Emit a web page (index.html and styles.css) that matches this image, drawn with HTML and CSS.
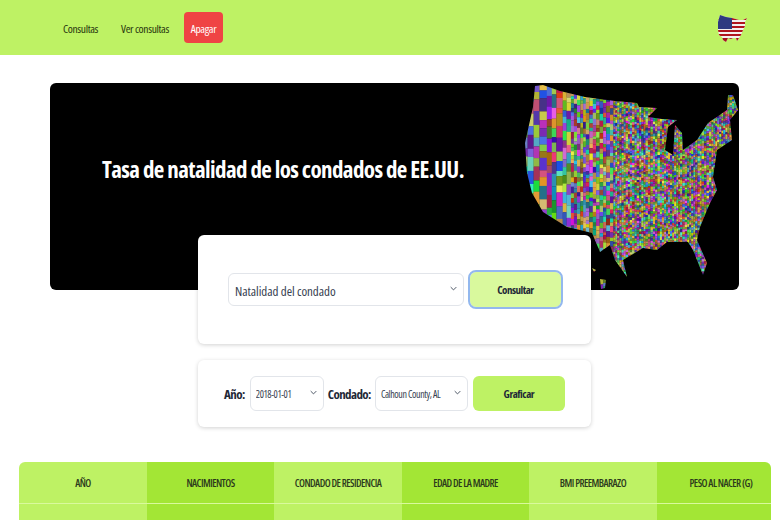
FILE: index.html
```html
<!DOCTYPE html>
<html lang="es">
<head>
<meta charset="utf-8">
<title>Tasa de natalidad</title>
<link rel="stylesheet" href="styles.css">
</head>
<body>
<nav class="nav">
  <a class="nav-link" href="#">Consultas</a>
  <a class="nav-link nav-link-second" href="#">Ver consultas</a>
  <a class="nav-off" href="#">Apagar</a>
  <svg class="flag" viewBox="718 13 30 28" aria-hidden="true">
    <defs>
      <clipPath id="flag-clip">
        <path d="M720 14 L726 16 L732 17 L739 19 L743 19 L747 17 L745 21 L745 25 L743 29 L741 34 L739 37 L737 40 L736 37 L733 37 L731 38 L728 37 L726 41 L723 39 L722 36 L719 34 L718 29 L718 21 Z"/>
      </clipPath>
    </defs>
    <g clip-path="url(#flag-clip)">
      <rect x="718" y="13" width="30" height="28" fill="#f4f0f0"/>
      <rect x="718" y="17" width="30" height="2" fill="#b0141e"/>
      <rect x="718" y="21" width="30" height="2" fill="#b0141e"/>
      <rect x="718" y="25" width="30" height="2" fill="#b0141e"/>
      <rect x="718" y="29" width="30" height="2" fill="#b0141e"/>
      <rect x="718" y="33" width="30" height="2" fill="#b0141e"/>
      <rect x="718" y="37" width="30" height="4" fill="#a5141e"/>
      <rect x="718" y="13" width="14" height="15" fill="#2e3a80"/>
    </g>
  </svg>
</nav>

<main class="main">
  <section class="hero">
    <h1 class="hero-title">Tasa de natalidad de los condados de EE.UU.</h1>
    <svg id="us-map" class="hero-map" viewBox="524 83 215 207" aria-hidden="true"></svg>
  </section>

  <section class="card card-query">
    <div class="select-wrap select-wide">
      <select class="select"><option>Natalidad del condado</option></select>
      <svg class="chev" viewBox="0 0 10 6"><path d="M1 1l4 4 4-4"/></svg>
    </div>
    <button class="btn btn-query" type="button">Consultar</button>
  </section>

  <section class="card card-chart">
    <label class="label" for="anio">Año:</label>
    <div class="select-wrap select-year">
      <select class="select select-small" id="anio"><option>2018-01-01</option></select>
      <svg class="chev" viewBox="0 0 10 6"><path d="M1 1l4 4 4-4"/></svg>
    </div>
    <label class="label" for="condado">Condado:</label>
    <div class="select-wrap select-county">
      <select class="select select-small" id="condado"><option>Calhoun County, AL</option></select>
      <svg class="chev" viewBox="0 0 10 6"><path d="M1 1l4 4 4-4"/></svg>
    </div>
    <button class="btn btn-chart" type="button">Graficar</button>
  </section>
</main>

<div class="table">
  <div class="cell head">AÑO</div>
  <div class="cell head alt">NACIMIENTOS</div>
  <div class="cell head">CONDADO DE RESIDENCIA</div>
  <div class="cell head alt">EDAD DE LA MADRE</div>
  <div class="cell head">BMI PREEMBARAZO</div>
  <div class="cell head alt head-last">PESO AL NACER (G)</div>
  <div class="cell"></div>
  <div class="cell alt"></div>
  <div class="cell"></div>
  <div class="cell alt"></div>
  <div class="cell"></div>
  <div class="cell alt"></div>
</div>
<script src="map.js"></script>
</body>
</html>
```
FILE: styles.css
```css
* { box-sizing: border-box; }
html, body { height: 520px; overflow: hidden; }
body {
  margin: 0;
  background: #fff;
  color: #1f2937;
  font-family: "Open Sans", "Noto Sans", sans-serif;
  font-stretch: 75%;
}
.nav {
  height: 55px;
  background: #bef264;
  display: flex;
  align-items: center;
  padding: 0 32px 0 63px;
  font-size: 11.5px;
  letter-spacing: -0.35px;
}
.nav-link { color: #28350f; text-decoration: none; padding-top: 2px; }
.nav-link-second { margin-left: 23px; }
.nav-off {
  margin-left: 15px;
  width: 39px;
  height: 31px;
  border-radius: 4px;
  background: #ef4444;
  color: #fff;
  padding-top: 2px;
  text-decoration: none;
  display: flex;
  align-items: center;
  justify-content: center;
}
.flag { width: 30px; height: 28px; margin-left: auto; }

.main { width: 689px; margin: 28px 0 0 50px; }
.hero {
  height: 207px;
  background: #000;
  border-radius: 6px;
  display: flex;
  align-items: flex-start;
  justify-content: space-between;
  padding-left: 52px;
  overflow: hidden;
}
.hero-title {
  margin: 70px 0 0;
  color: #fff;
  font-size: 23px;
  font-weight: 700;
  letter-spacing: -0.6px;
  white-space: nowrap;
}
.hero-map { width: 215px; height: 207px; flex: none; filter: blur(0.35px); }

.card {
  width: 393px;
  margin: 0 0 0 148px;
  background: #fff;
  border-radius: 6px;
  box-shadow: 0 1px 4px rgba(0, 0, 0, .18);
  display: flex;
  align-items: center;
  justify-content: center;
}
.card-query { height: 109px; margin-top: -55px; position: relative; gap: 6px; }
.card-chart { height: 67px; margin-top: 16px; gap: 4px; }

.select-wrap { position: relative; height: 33px; }
.select-wide { width: 236px; }
.select-year { width: 74px; height: 35px; margin-left: 1px; }
.select-county { width: 93px; height: 35px; }
.select {
  appearance: none;
  width: 100%;
  height: 100%;
  border: 1px solid #e2e5ea;
  border-radius: 6px;
  background: #fff;
  color: #374151;
  font-family: inherit;
  font-stretch: 75%;
  font-size: 13px;
  letter-spacing: -0.05px;
  padding: 3px 16px 0 6px;
}
.select-small { font-size: 10px; letter-spacing: -0.4px; padding: 0 14px 0 5px; }
.chev {
  position: absolute;
  top: 50%;
  right: 7px;
  width: 7px;
  height: 5px;
  margin-top: -4px;
  fill: none;
  stroke: #4b5563;
  stroke-width: 1.4;
}
.btn {
  border: 0;
  border-radius: 6px;
  color: #1f2937;
  font-family: inherit;
  font-stretch: 75%;
  font-size: 11px;
  font-weight: 700;
  letter-spacing: -0.5px;
}
.btn-query {
  width: 91px;
  height: 35px;
  background: #d9f99d;
  outline: 2px solid #93b8ee;
}
.btn-chart { width: 92px; height: 35px; background: #bef264; margin-left: 1px; }
.label { font-size: 13px; font-weight: 700; letter-spacing: -0.6px; color: #1f2937; }

.table {
  width: 752px;
  margin: 35px 0 0 19px;
  display: grid;
  grid-template-columns: 128px 127px 128px 127px 128px 114px;
  grid-auto-rows: 42px;
  border-radius: 6px 6px 0 0;
  overflow: hidden;
}
.cell {
  background: #bef264;
  display: flex;
  align-items: center;
  justify-content: center;
  font-size: 10.5px;
  font-weight: 600;
  letter-spacing: -0.55px;
  color: #2c3a1c;
  white-space: nowrap;
}
.alt { background: #a3e635; }
.head { border-bottom: 1px solid #d9f99d; }
.head-last { padding-left: 14px; }
```
FILE: map.js
```js
(function () {
  var NS = 'http://www.w3.org/2000/svg';
  var svg = document.getElementById('us-map');
  var outline = 'M535 86 L543 85 L560 91 L585 97 L615 101 L637 103 L639 107 L657 108 L648 117 L662 119 L677 120 L668 127 L665 150 L673 155 L675 125 L682 133 L683 150 L697 140 L708 123 L727 110 L728 95 L733 95 L738 110 L730 120 L732 140 L717 150 L713 177 L717 190 L710 203 L700 227 L697 240 L707 263 L703 275 L693 250 L688 242 L667 242 L657 250 L643 248 L623 260 L627 277 L615 260 L610 245 L600 252 L592 233 L580 230 L567 227 L543 212 L532 193 L527 173 L525 143 L533 107 Z ' +
    'M600 279 L606 280 L605 288 L601 289 Z M592 268 L596 270 L594 272 Z';
  var seed = 12345;
  function rnd() {
    seed = (seed * 1664525 + 1013904223) >>> 0;
    return (seed >>> 8) / 16777216;
  }
  var palette = [275, 255, 225, 195, 165, 130, 95, 60, 35, 10, 340, 300, 45, 80];
  function color() {
    var h = palette[Math.floor(rnd() * palette.length)];
    var s = 40 + rnd() * 45;
    var l = 32 + rnd() * 32;
    return 'hsl(' + h + ',' + s + '%,' + l + '%)';
  }
  var defs = document.createElementNS(NS, 'defs');
  var clip = document.createElementNS(NS, 'clipPath');
  clip.setAttribute('id', 'map-clip');
  var p = document.createElementNS(NS, 'path');
  p.setAttribute('d', outline);
  clip.appendChild(p);
  defs.appendChild(clip);
  svg.appendChild(defs);
  var g = document.createElementNS(NS, 'g');
  g.setAttribute('clip-path', 'url(#map-clip)');
  var x = 524;
  while (x < 739) {
    var w = x < 570 ? 3.5 + rnd() * 4 : x < 610 ? 2.5 + rnd() * 2 : 1.8 + rnd() * 0.8;
    var y = 84 + rnd() * -4;
    while (y < 290) {
      var h = x < 570 ? 5 + rnd() * 9 : x < 610 ? 3 + rnd() * 4 : 1.8 + rnd() * 1.2;
      var r = document.createElementNS(NS, 'rect');
      r.setAttribute('x', x.toFixed(1));
      r.setAttribute('y', y.toFixed(1));
      r.setAttribute('width', (w + 0.2).toFixed(1));
      r.setAttribute('height', (h + 0.2).toFixed(1));
      r.setAttribute('fill', color());
      g.appendChild(r);
      y += h;
    }
    x += w;
  }
  svg.appendChild(g);
})();
```
